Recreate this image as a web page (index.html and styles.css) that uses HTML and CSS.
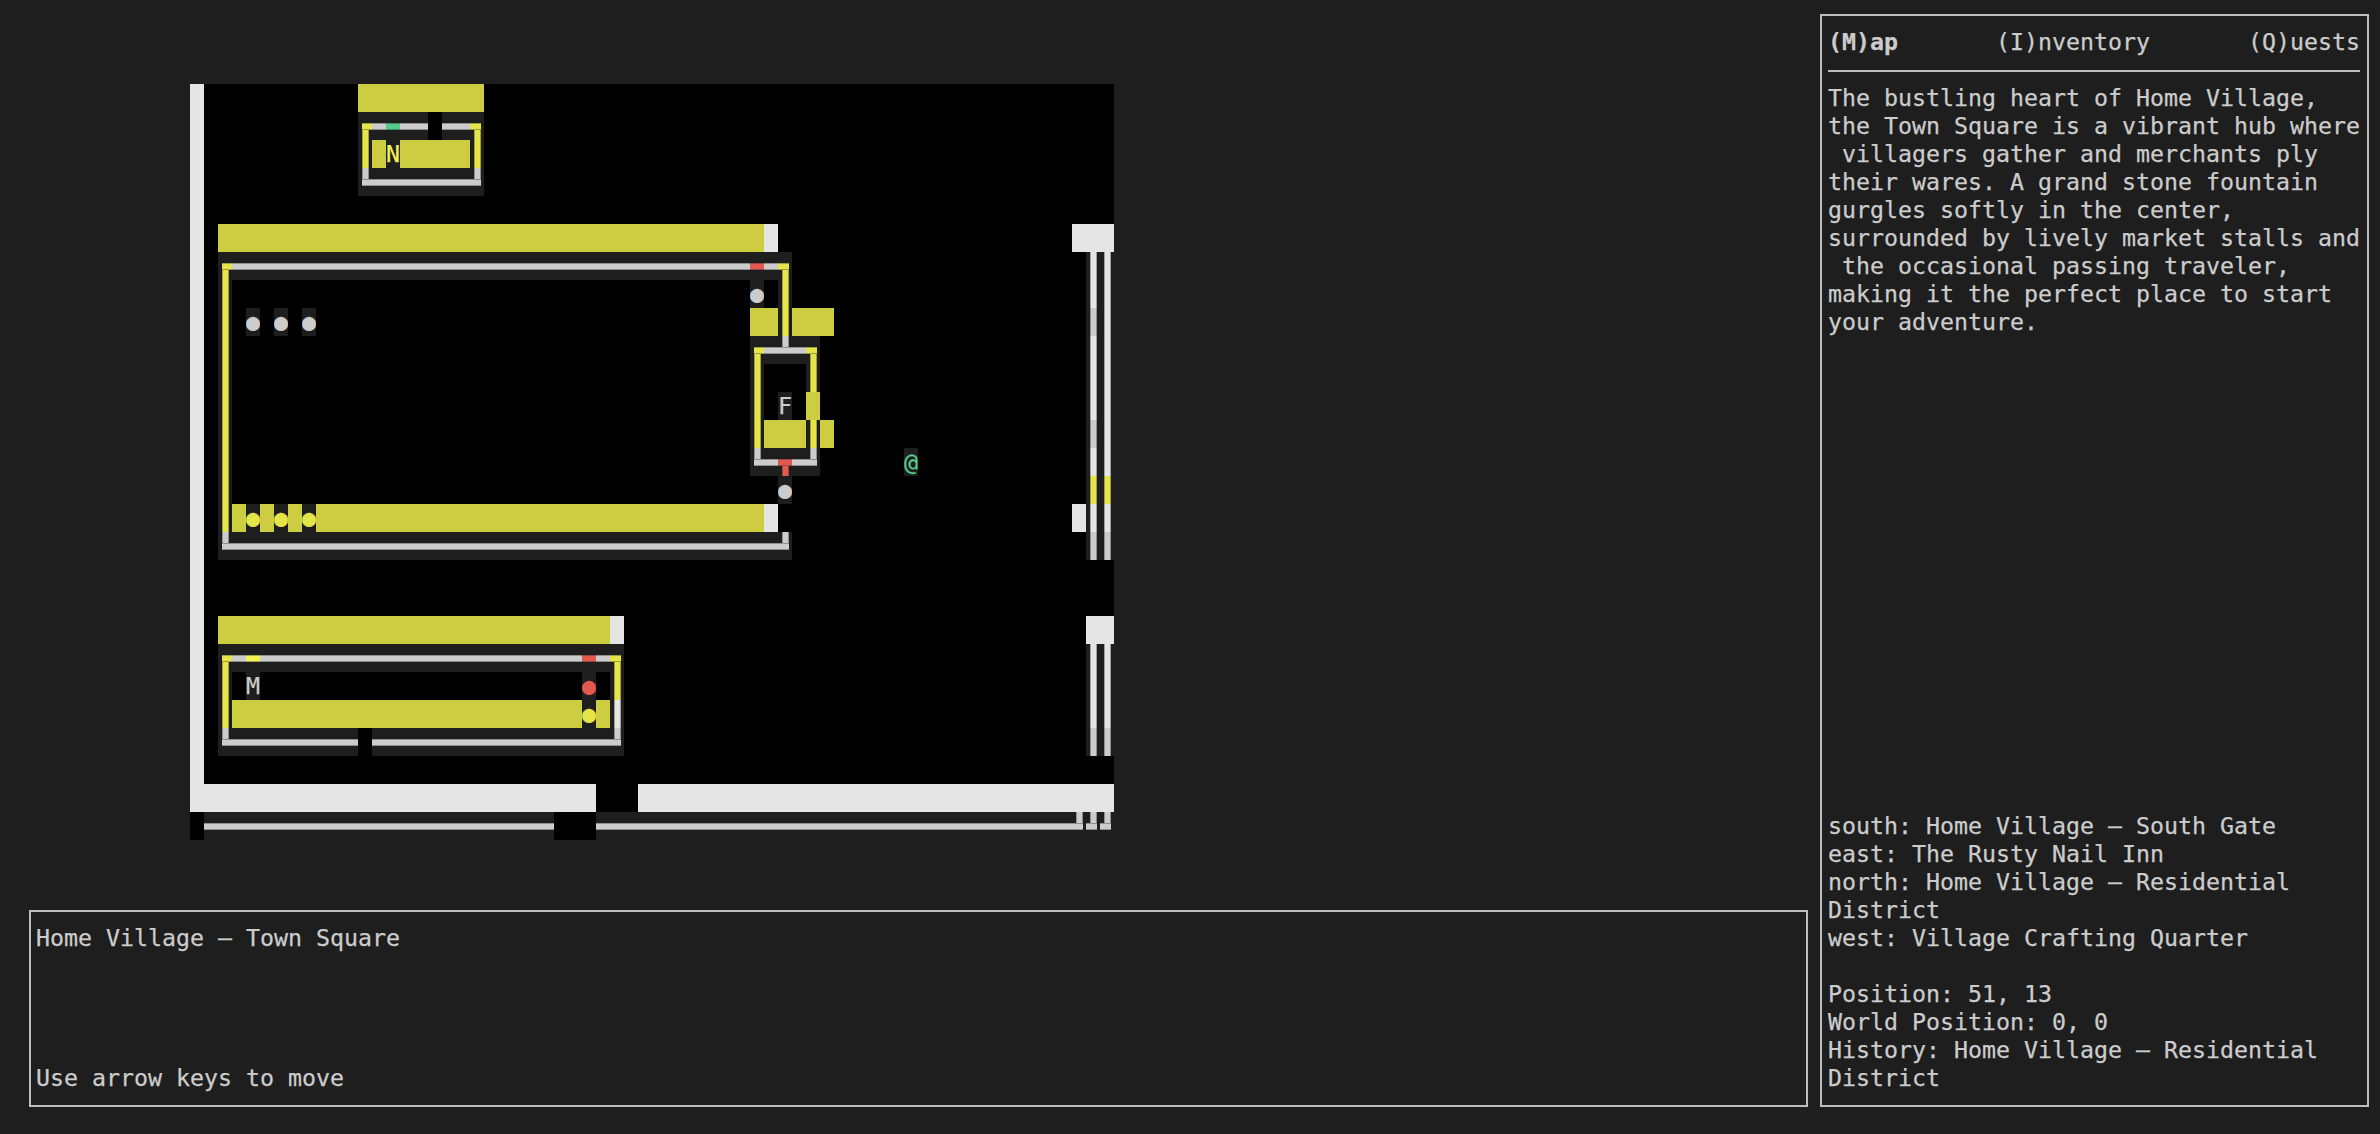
FILE: index.html
```html
<!DOCTYPE html>
<html lang="en">
<head>
    <meta charset="UTF-8">
    <title>Home Village</title>
    <link rel="stylesheet" href="styles.css">
</head>
<body>
    <div class="game-column">
        <div class="map-area">
            <div id="map" class="map"></div>
        </div>
        <div class="message-log">
            <div>Home Village – Town Square</div>
            <div>Use arrow keys to move</div>
        </div>
    </div>
    <aside class="side-panel">
        <nav class="tabs">
            <span class="tab active">(M)ap</span>
            <span class="tab">(I)nventory</span>
            <span class="tab">(Q)uests</span>
        </nav>
        <pre class="description">The bustling heart of Home Village,
the Town Square is a vibrant hub where
 villagers gather and merchants ply
their wares. A grand stone fountain
gurgles softly in the center,
surrounded by lively market stalls and
 the occasional passing traveler,
making it the perfect place to start
your adventure.</pre>
        <pre class="status">south: Home Village – South Gate
east: The Rusty Nail Inn
north: Home Village – Residential
District
west: Village Crafting Quarter

Position: 51, 13
World Position: 0, 0
History: Home Village – Residential
District</pre>
    </aside>
    <script src="map.js"></script>
</body>
</html>
```

FILE: styles.css
```css
* {
    box-sizing: border-box;
}
html, body {
    height: 100%;
}
body {
    display: flex;
    gap: 12px;
    margin: 0;
    padding: 14px 11px 27px 29px;
    overflow: hidden;
    background-color: #1e1e1e;
    color: #cccccc;
    font-family: "DejaVu Sans Mono", "Liberation Mono", monospace;
    font-size: 23.25px;
    line-height: 28px;
    -webkit-text-stroke: 0.25px currentColor;
}
pre {
    margin: 0;
    font: inherit;
}

/* left side */
.game-column {
    flex: 1;
    display: flex;
    flex-direction: column;
    min-width: 0;
}
.map-area {
    flex: 1;
    padding: 70px 0 0 161px;
}
.message-log {
    display: flex;
    flex-direction: column;
    justify-content: space-between;
    height: 197px;
    padding: 12px 5px 13px;
    border: 2px solid #bdbdbd;
}

/* right side */
.side-panel {
    display: flex;
    flex-direction: column;
    justify-content: space-between;
    width: 549px;
    padding: 12px 7px 13px 6px;
    border: 2px solid #bdbdbd;
}
.tabs {
    display: flex;
    justify-content: space-between;
    padding-bottom: 14px;
    border-bottom: 2px solid #bdbdbd;
    margin-bottom: 12px;
}
.tab.active {
    font-weight: bold;
}
.description {
    flex: 1;
}

/* map grid, one cell per terminal character */
.map {
    display: grid;
    grid-template-columns: repeat(66, 14px);
    grid-template-rows: repeat(27, 28px);
    width: 924px;
    background-color: #000000;
}
.cell {
    width: 14px;
    height: 28px;
    overflow: hidden;
    text-align: center;
    background-repeat: no-repeat;
    --edge: color-mix(in srgb, currentColor 65%, #1e1e1e);
    --line-h: linear-gradient(to bottom, var(--edge) 1px, currentColor 1px, currentColor 6px, var(--edge) 6px);
    --line-v: linear-gradient(to right, var(--edge) 1px, currentColor 1px, currentColor 6px, var(--edge) 6px);
}
.floor { background-color: #1e1e1e; }
.grass { background-color: #cdcd42; }
.stone { background-color: #e5e5e5; }

.gray { color: #cccccc; }
.white { color: #e5e5e5; }
.yellow { color: #e5e54a; }
.lemon { color: #f2f255; }
.red { color: #e05a52; }
.green { color: #55cc8c; }

/* wall pieces */
.h {
    background-image: var(--line-h);
    background-size: 100% 7px;
    background-position: 0 11px;
}
.v {
    background-image: var(--line-v);
    background-size: 7px 100%;
    background-position: 4px 0;
}
.tl {
    background-image: var(--line-h), var(--line-v);
    background-size: 10px 7px, 7px 17px;
    background-position: 4px 11px, 4px 11px;
}
.tr {
    background-image: var(--line-h), var(--line-v);
    background-size: 11px 7px, 7px 17px;
    background-position: 0 11px, 4px 11px;
}
.bl {
    background-image: var(--line-h), var(--line-v);
    background-size: 10px 7px, 7px 18px;
    background-position: 4px 11px, 4px 0;
}
.br {
    background-image: var(--line-h), var(--line-v);
    background-size: 11px 7px, 7px 18px;
    background-position: 0 11px, 4px 0;
}
.tee-up {
    background-image: var(--line-h), var(--line-v);
    background-size: 100% 7px, 7px 12px;
    background-position: 0 11px, 4px 0;
}
.tee-down {
    background-image: var(--line-h), var(--line-v);
    background-size: 100% 7px, 7px 17px;
    background-position: 0 11px, 4px 11px;
}
```

FILE: map.js
```js
const COLS = 66;
const ROWS = 27;
const DOT = '●';

const grid = [];
for (let r = 0; r < ROWS; r++) {
    grid.push(new Array(COLS).fill(null));
}

function put(r, c, cls, glyph) {
    grid[r][c] = { cls, glyph: glyph || '' };
}

function fill(r1, c1, r2, c2, cls) {
    for (let r = r1; r <= r2; r++) {
        for (let c = c1; c <= c2; c++) put(r, c, cls);
    }
}

// gray outline with yellow top corners, dark wall cells, empty inside
function room(r1, c1, r2, c2) {
    fill(r1, c1, r1, c2, 'floor gray h');
    fill(r2, c1, r2, c2, 'floor gray h');
    fill(r1 + 1, c1, r2 - 1, c1, 'floor yellow v');
    fill(r1 + 1, c2, r2 - 1, c2, 'floor yellow v');
    fill(r1 + 1, c1 + 1, r2 - 1, c2 - 1, 'void');
    put(r1, c1, 'floor yellow tl');
    put(r1, c2, 'floor yellow tr');
    put(r2, c1, 'floor gray bl');
    put(r2, c2, 'floor gray br');
}

// outer wall
fill(0, 0, 25, 0, 'stone');
fill(25, 0, 25, 65, 'stone');
fill(25, 29, 25, 31, 'void');
fill(26, 1, 26, 62, 'floor gray h');
fill(26, 26, 26, 28, 'void');
fill(26, 63, 26, 65, 'floor gray br');

// north house
fill(0, 12, 0, 20, 'grass');
room(1, 12, 3, 20);
put(1, 14, 'floor green h');
put(1, 17, 'void');
put(2, 13, 'grass');
put(2, 14, 'floor lemon', 'N');
fill(2, 15, 2, 19, 'grass');

// town hall
fill(5, 2, 5, 40, 'grass');
put(5, 41, 'stone');
room(6, 2, 16, 42);
put(6, 40, 'floor red h');
put(7, 40, 'floor gray', DOT);
[4, 6, 8].forEach(c => put(8, c, 'floor gray', DOT));
fill(8, 40, 8, 41, 'grass');
fill(8, 43, 8, 45, 'grass');
fill(9, 42, 15, 42, 'void');
fill(15, 3, 15, 40, 'grass');
[4, 6, 8].forEach(c => put(15, c, 'floor yellow', DOT));
put(15, 41, 'stone');

// forge
room(9, 40, 13, 44);
put(9, 42, 'floor gray tee-up');
put(11, 42, 'floor gray', 'F');
put(11, 44, 'grass');
fill(12, 41, 12, 43, 'grass');
put(12, 45, 'grass');
put(13, 42, 'floor red tee-down');
put(14, 42, 'floor gray', DOT);

// market
fill(19, 2, 19, 29, 'grass');
put(19, 30, 'stone');
room(20, 2, 23, 30);
put(20, 4, 'floor lemon h');
put(20, 28, 'floor red h');
put(21, 4, 'floor gray', 'M');
put(21, 28, 'floor red', DOT);
fill(22, 3, 22, 27, 'grass');
put(22, 28, 'floor yellow', DOT);
put(22, 29, 'grass');
put(22, 30, 'floor white v');
put(23, 12, 'void');

// east road
fill(5, 63, 5, 65, 'stone');
fill(6, 64, 16, 65, 'floor white v');
put(8, 64, 'floor gray v');
put(12, 64, 'floor gray v');
fill(14, 64, 14, 65, 'floor yellow v');
put(15, 63, 'stone');
fill(16, 64, 16, 65, 'floor gray v');
fill(19, 64, 19, 65, 'stone');
fill(20, 64, 22, 65, 'floor white v');
fill(23, 64, 23, 65, 'floor gray v');

// player
put(13, 51, 'floor green', '@');

const map = document.getElementById('map');
grid.forEach(row => {
    row.forEach(tile => {
        const cell = document.createElement('div');
        cell.className = 'cell ' + (tile ? tile.cls : 'void');
        if (tile && tile.glyph) cell.textContent = tile.glyph;
        map.appendChild(cell);
    });
});
```
